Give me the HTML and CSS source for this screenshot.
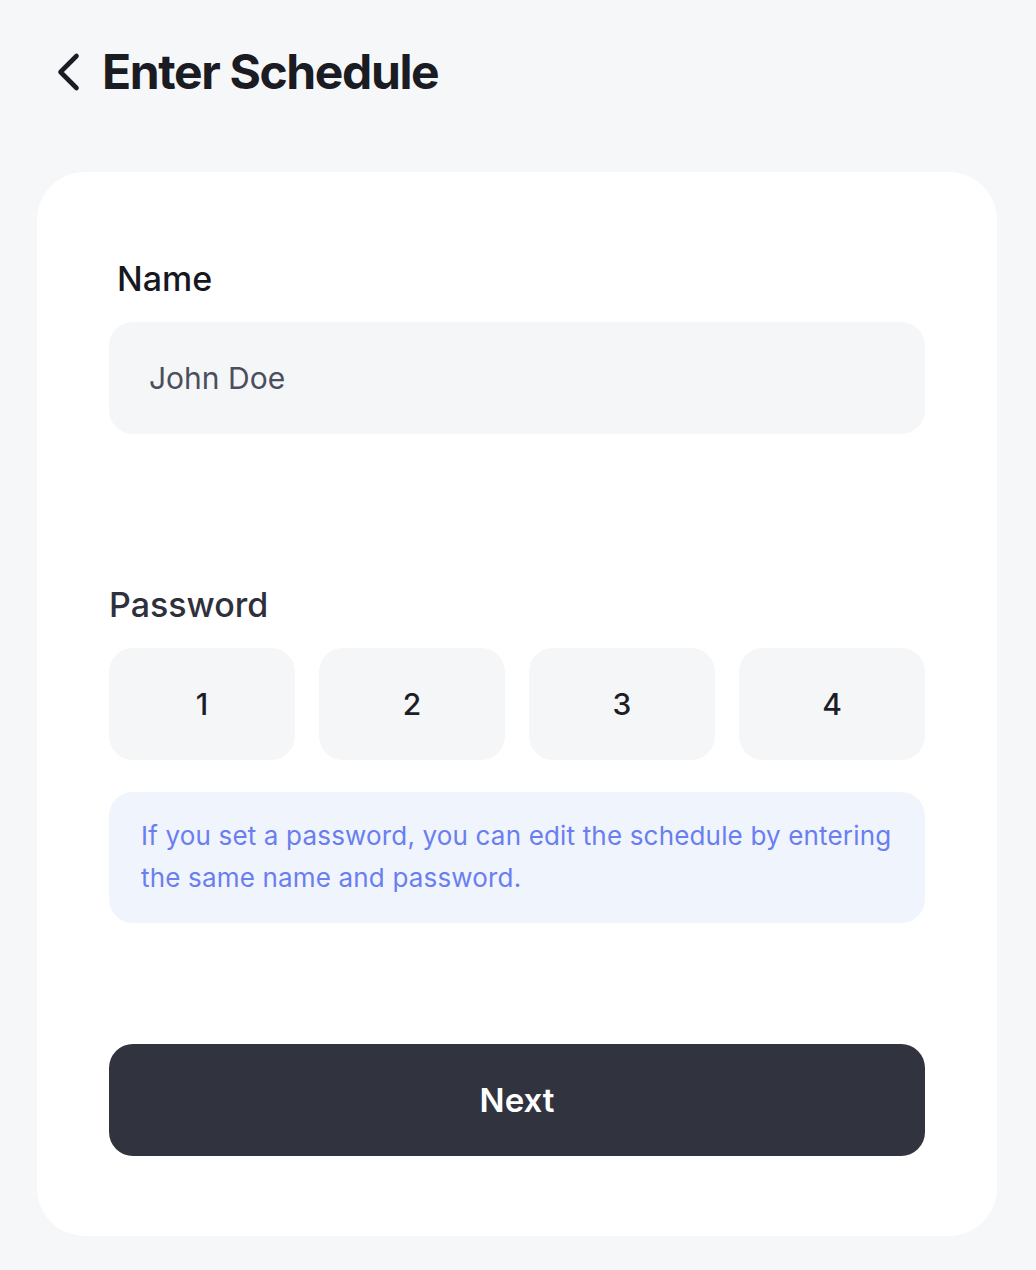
FILE: index.html
```html
<!DOCTYPE html>
<html lang="en">
<head>
<meta charset="utf-8">
<title>Enter Schedule</title>
<link rel="stylesheet" href="styles.css">
</head>
<body>
<header class="header">
  <button class="back" aria-label="Back">
    <svg width="26" height="40" viewBox="0 0 26 40" fill="none" stroke="currentColor" stroke-width="4.6" stroke-linecap="round" stroke-linejoin="round"><path d="M20.5 4 L4.5 20 L20.5 36"/></svg>
  </button>
  <h1 class="title">Enter Schedule</h1>
</header>
<main class="card">
  <section class="field">
    <label class="label label-name">Name</label>
    <div class="input">John Doe</div>
  </section>
  <section class="field field-password">
    <label class="label label-password">Password</label>
    <div class="pins">
      <div class="pin">1</div>
      <div class="pin">2</div>
      <div class="pin">3</div>
      <div class="pin">4</div>
    </div>
    <p class="notice">If you set a password, you can edit the schedule by entering the same name and password.</p>
  </section>
  <button class="next">Next</button>
</main>
</body>
</html>
```

FILE: styles.css
```css
* { box-sizing: border-box; }
html, body { margin: 0; padding: 0; }
body {
  background: #f6f7f9;
  font-family: Inter, "Noto Sans", sans-serif;
  color: #1a1b23;
  width: 1036px;
  min-height: 1270px;
}
.header {
  display: flex;
  align-items: center;
  height: 64px;
  margin-top: 40px;
  padding-left: 55px;
}
.back {
  display: flex;
  align-items: center;
  justify-content: center;
  padding: 0;
  border: 0;
  background: none;
  color: #1a1b23;
  width: 28px;
  height: 40px;
  margin-right: 19px;
}
.title {
  margin: 0;
  font-size: 48px;
  line-height: 64px;
  font-weight: 700;
  letter-spacing: -1.38px;
  color: #1a1b23;
}
.card {
  margin: 68px 0 0 37px;
  width: 960px;
  height: 1064px;
  background: #ffffff;
  border-radius: 48px;
  padding: 86px 72px 80px;
  display: flex;
  flex-direction: column;
}
.field { display: flex; flex-direction: column; }
.label {
  font-size: 34px;
  line-height: 42px;
  font-weight: 500;
  margin-bottom: 22px;
}
.label-name { color: #16171f; padding-left: 8px; }
.label-password { color: #2e313c; }
.input {
  height: 112px;
  border-radius: 24px;
  background: #f5f6f8;
  display: flex;
  align-items: center;
  padding-left: 40px;
  font-size: 30px;
  color: #4b4e5e;
}
.field-password { margin-top: 150px; }
.pins {
  display: grid;
  grid-template-columns: repeat(4, 1fr);
  gap: 24px;
}
.pin {
  height: 112px;
  border-radius: 24px;
  background: #f5f6f8;
  display: flex;
  align-items: center;
  justify-content: center;
  font-size: 30px;
  font-weight: 500;
  color: #1c1d25;
}
.notice {
  margin: 32px 0 0;
  background: #f0f4fd;
  border-radius: 24px;
  padding: 23px 32px 24px;
  font-size: 26px;
  line-height: 42px;
  letter-spacing: 0.17px;
  color: #6a7ef0;
}
.next {
  margin-top: 121px;
  height: 112px;
  border: 0;
  border-radius: 24px;
  background: #31343f;
  color: #ffffff;
  font-family: Inter, "Noto Sans", sans-serif;
  font-size: 33px;
  font-weight: 600;
}
```
